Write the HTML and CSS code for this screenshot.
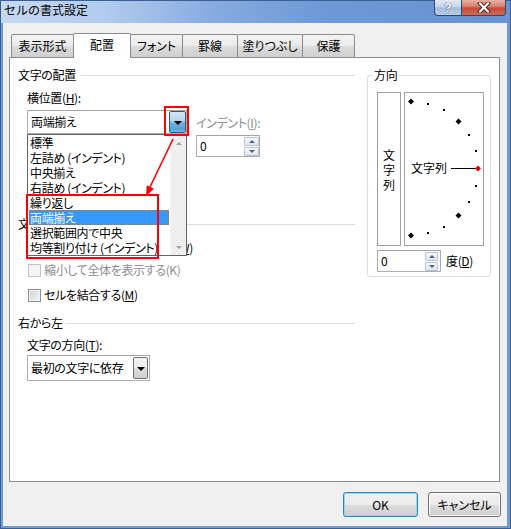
FILE: index.html
```html
<!DOCTYPE html>
<html lang="ja">
<head>
<meta charset="utf-8">
<title>セルの書式設定</title>
<link rel="stylesheet" href="styles.css">
</head>
<body>
<div class="window">
  <div class="titlebar">
    <div class="title">セルの書式設定</div>
    <div class="capbtns">
      <div class="capbtn help"><span class="qmark">?</span></div>
      <div class="capbtn close">
        <svg width="14" height="11" viewBox="0 0 14 11"><path d="M3 1.5 L11 9.5 M11 1.5 L3 9.5" stroke="#4a1a14" stroke-width="4" stroke-linecap="square"/><path d="M3 1.5 L11 9.5 M11 1.5 L3 9.5" stroke="#fff" stroke-width="2.2" stroke-linecap="square"/></svg>
      </div>
    </div>
  </div>
  <div class="client">
    <div class="tabs">
      <div class="tab w1">表示形式</div>
      <div class="tab active w2">配置</div>
      <div class="tab w3">フォント</div>
      <div class="tab w4">罫線</div>
      <div class="tab w5">塗りつぶし</div>
      <div class="tab w6">保護</div>
    </div>
    <div class="panel">
      <div class="col-left">
        <div class="gh">文字の配置</div>
        <div class="lbl">横位置(<u>H</u>):</div>
        <div class="row-h">
          <div class="combo-wrap">
            <div class="combo combo-h"><span class="combo-text">両端揃え</span><span class="ddbtn hot"><i class="tri"></i></span></div>
            <div class="listbox">
              <div class="items">
                <div class="item">標準</div>
                <div class="item">左詰め (インデント)</div>
                <div class="item">中央揃え</div>
                <div class="item">右詰め (インデント)</div>
                <div class="item">繰り返し</div>
                <div class="item sel">両端揃え</div>
                <div class="item">選択範囲内で中央</div>
                <div class="item">均等割り付け (インデント)</div>
              </div>
              <div class="vscroll"><i class="sa up"></i><i class="sa down"></i></div>
            </div>
            <div class="mark mark-btn"></div>
            <div class="mark mark-items"></div>
            <svg class="arrow" width="190" height="100" viewBox="0 0 190 100">
              <line x1="146" y1="29" x2="123" y2="77" stroke="#f00" stroke-width="1.6"/>
              <polygon points="119,86 127,78.7 119.7,75.3" fill="#f00"/>
            </svg>
          </div>
          <div class="indent">
            <div class="lbl-dis">インデント(<u>I</u>):</div>
            <div class="spin spin-indent"><span class="val">0</span><span class="spinbtns"><i class="sb"><b class="tu"></b></i><i class="sb"><b class="td"></b></i></span></div>
          </div>
        </div>
        <div class="gh gh-ctrl">文字の制御</div>
        <div class="cb cb-wrap"><i class="box"></i>折り返して全体を表示する(<u>W</u>)</div>
        <div class="cb cb-shrink dis"><i class="box"></i>縮小して全体を表示する(K)</div>
        <div class="cb cb-merge"><i class="box"></i>セルを結合する(<u>M</u>)</div>
        <div class="gh gh-rtl">右から左</div>
        <div class="lbl lbl-dir">文字の方向(<u>T</u>):</div>
        <div class="combo combo-dir"><span class="combo-text">最初の文字に依存</span><span class="ddbtn"><i class="tri"></i></span></div>
      </div>
      <fieldset class="orient">
        <legend>方向</legend>
        <div class="orient-body">
          <div class="vtext"><span>文</span><span>字</span><span>列</span></div>
          <div class="dial">
            <svg width="78" height="152" viewBox="0 0 78 152">
              <polygon points="6,5.5 9,8.5 6,11.5 3,8.5" fill="#000"/>
              <rect x="22" y="10" width="2" height="2" fill="#000"/>
              <rect x="38" y="16" width="2" height="2" fill="#000"/>
              <polygon points="53.5,25.5 56.5,28.5 53.5,31.5 50.5,28.5" fill="#000"/>
              <rect x="63" y="41" width="2" height="2" fill="#000"/>
              <rect x="70" y="57" width="2" height="2" fill="#000"/>
              <line x1="46" y1="75.5" x2="71" y2="75.5" stroke="#000" stroke-width="1"/>
              <polygon points="73,72.5 76,75.5 73,78.5 70,75.5" fill="#e00000"/>
              <rect x="70" y="92" width="2" height="2" fill="#000"/>
              <rect x="63" y="108" width="2" height="2" fill="#000"/>
              <polygon points="53.5,119.5 56.5,122.5 53.5,125.5 50.5,122.5" fill="#000"/>
              <rect x="38" y="133" width="2" height="2" fill="#000"/>
              <rect x="22" y="139" width="2" height="2" fill="#000"/>
              <polygon points="6,139.5 9,142.5 6,145.5 3,142.5" fill="#000"/>
            </svg>
            <span class="dial-text">文字列</span>
          </div>
        </div>
        <div class="deg-row">
          <div class="spin spin-deg"><span class="val">0</span><span class="spinbtns"><i class="sb"><b class="tu"></b></i><i class="sb"><b class="td"></b></i></span></div>
          <span class="deg-label">度(<u>D</u>)</span>
        </div>
      </fieldset>
    </div>
    <div class="btnrow">
      <button class="btn default">OK</button>
      <button class="btn cancel">キャンセル</button>
    </div>
  </div>
</div>
</body>
</html>
```

FILE: styles.css
```css
* { box-sizing: border-box; margin: 0; padding: 0; }
html, body { width: 511px; height: 529px; overflow: hidden; }
body {
  font-family: "Noto Sans CJK JP", "Noto Sans", sans-serif;
  font-size: 12px;
  color: #000;
  background: #6d9ad6;
  font-feature-settings: "palt" 1;
  letter-spacing: -0.35px;
}
u { text-decoration: underline; text-underline-offset: 1px; }

.window {
  width: 511px;
  height: 529px;
  border: 1px solid #3b5f92;
  background: #6f9cd8;
  display: flex;
  flex-direction: column;
}

.titlebar {
  height: 22px;
  flex: none;
  display: flex;
  align-items: flex-start;
  background: linear-gradient(to right, #c6d9f1 0%, #b3cced 20%, #86abdf 42%, #6c98d5 65%, #6993d2 100%);
}
.title {
  font-feature-settings: normal;
  letter-spacing: 0;
  line-height: 18px;
  padding-left: 3px;
  color: #000;
}
.capbtns { margin-left: auto; margin-right: 4px; margin-top: -1px; display: flex; }
.capbtn {
  height: 16px;
  border: 1px solid #34496a;
  border-top: none;
  display: flex;
  align-items: center;
  justify-content: center;
}
.help {
  width: 28px;
  border-radius: 0 0 0 4px;
  background: linear-gradient(#e2eaf5, #c5d5eb 45%, #a5bddd 52%, #b8cde7);
}
.qmark {
  font-family: "Liberation Sans", sans-serif;
  font-weight: bold;
  font-size: 12px;
  line-height: 14px;
  letter-spacing: 0;
  color: #fff;
  text-shadow: 0 0 1px #2b3d5a, 0 0 1px #2b3d5a;
}
.close {
  width: 45px;
  margin-left: -1px;
  border-radius: 0 0 4px 0;
  background: linear-gradient(#e9b1a4, #d57b69 45%, #c24a3b 52%, #d16a56);
}

.client {
  margin: 0 3px 2px 2px;
  width: 504px;
  height: 503px;
  background: #f0f0f0;
  padding: 10px 6px 0 6px;
  display: flex;
  flex-direction: column;
}

.tabs {
  display: flex;
  align-items: flex-start;
  height: 25px;
  margin-left: 2px;
  margin-bottom: -1px;
  position: relative;
  z-index: 2;
}
.tab {
  height: 23px;
  margin-top: 1px;
  margin-left: -1px;
  border: 1px solid #898c95;
  border-bottom: none;
  border-radius: 2px 2px 0 0;
  background: linear-gradient(#f3f3f3, #ebebeb 50%, #dddddd 50%, #cfcfcf);
  line-height: 21px;
  letter-spacing: 0;
  text-align: center;
  white-space: nowrap;
}
.tab:first-child { margin-left: 0; }
.tab.active {
  height: 25px;
  margin-top: 0;
  background: #fff;
  position: relative;
  z-index: 1;
  line-height: 22px;
}
.w1 { width: 63px; }
.w2 { width: 58px; }
.w3 { width: 53px; }
.w4 { width: 56px; }
.w5 { width: 66px; }
.w6 { width: 53px; }

.panel {
  position: relative;
  z-index: 1;
  width: 491px;
  height: 425px;
  flex: none;
  border: 1px solid #898c95;
  background: #fff;
  padding: 9px 8px 0 8px;
  display: grid;
  grid-template-columns: 337px 124px;
  column-gap: 12px;
  align-items: start;
}

.col-left { position: relative; }
.gh {
  display: flex;
  align-items: center;
  height: 16px;
  line-height: 16px;
  white-space: nowrap;
}
.gh::after {
  content: "";
  flex: 1;
  height: 1px;
  background: #d5dfe5;
  margin-left: 4px;
}
.lbl { line-height: 16px; padding-left: 9px; margin-top: 7px; }
.row-h { display: flex; align-items: flex-start; margin-top: 4px; padding-left: 9px; }
.combo-wrap { position: relative; width: 160px; height: 24px; flex: none; }

.combo {
  display: flex;
  align-items: stretch;
  background: #fff;
  border: 1px solid #abadb3;
  border-top-color: #a0a4ab;
}
.combo-h { width: 160px; height: 24px; }
.combo-text { flex: 1; padding-left: 3px; line-height: 22px; white-space: nowrap; }
.ddbtn {
  width: 17px;
  flex: none;
  display: flex;
  align-items: center;
  justify-content: center;
  border: 1px solid #707070;
  border-radius: 2px;
  background: linear-gradient(#f2f2f2, #ebebeb 50%, #dddddd 50%, #cfcfcf);
}
.ddbtn.hot {
  border-color: #2c5c84;
  background: linear-gradient(#d5e7f6, #b7d5ee 45%, #72b2e3 50%, #5aa1d9 85%, #74b5e4);
}
.tri {
  width: 0;
  height: 0;
  border-left: 4px solid transparent;
  border-right: 4px solid transparent;
  border-top: 4px solid #000;
  margin-top: 1px;
}

.listbox {
  position: absolute;
  left: 0;
  top: 24px;
  width: 160px;
  height: 122px;
  border: 1px solid #646464;
  background: #fff;
  display: flex;
  z-index: 5;
}
.items { width: 142px; flex: none; }
.item {
  height: 15px;
  line-height: 15px;
  margin-left: 1px;
  width: 140px;
  padding-left: 1px;
  white-space: nowrap;
}
.item.sel {
  background: #3399ff;
  color: #fff;
  outline: 1px dotted #b5773a;
  outline-offset: -1px;
}
.vscroll {
  width: 16px;
  flex: none;
  background: #efefef;
  border-left: 1px solid #f8f8f8;
  display: flex;
  flex-direction: column;
  justify-content: space-between;
  align-items: center;
  padding: 7px 0 6px;
}
.sa { width: 0; height: 0; border-left: 3px solid transparent; border-right: 3px solid transparent; }
.sa.up { border-bottom: 3px solid #a3a3a3; }
.sa.down { border-top: 3px solid #a3a3a3; }

.mark {
  position: absolute;
  border: 2px solid #f00;
  pointer-events: none;
  z-index: 6;
}
.mark-btn { left: 137px; top: -4px; width: 25px; height: 30px; }
.mark-items { left: -1px; top: 84px; width: 133px; height: 65px; }
.arrow { position: absolute; left: 0; top: 0; overflow: visible; z-index: 6; }

.indent { margin-left: 9px; margin-top: 5px; }
.lbl-dis { line-height: 16px; color: #8d8d8d; white-space: nowrap; }

.spin {
  display: flex;
  align-items: center;
  background: #fff;
  border: 1px solid #abadb3;
  border-top-color: #a0a4ab;
}
.spin .val { flex: 1; padding-left: 3px; line-height: 20px; }
.spinbtns { display: flex; flex-direction: column; flex: none; }
.sb {
  width: 15px;
  height: 9px;
  border: 1px solid #b5c3d4;
  border-radius: 1px;
  background: linear-gradient(#f8fafc, #dfe6ef);
  display: flex;
  align-items: center;
  justify-content: center;
}
.sb + .sb { margin-top: 1px; }
.tu, .td { width: 0; height: 0; border-left: 3px solid transparent; border-right: 3px solid transparent; }
.tu { border-bottom: 3px solid #4d6185; }
.td { border-top: 3px solid #4d6185; }
.spin-indent { width: 64px; height: 22px; margin-top: 4px; }

.gh-ctrl { margin-top: 59px; }
.cb {
  display: flex;
  align-items: center;
  height: 16px;
  line-height: 16px;
  padding-left: 10px;
  white-space: nowrap;
}
.box {
  width: 13px;
  height: 13px;
  flex: none;
  margin-right: 3px;
  border: 1px solid #8e8f8f;
  background: linear-gradient(135deg, #cdd1d6, #f7f7f7);
  box-shadow: inset 0 0 0 1px #f2f2f2;
}
.cb.dis { color: #8d8d8d; }
.cb.dis .box { border-color: #c4c4c4; background: #f4f4f4; box-shadow: none; }
.cb-wrap { margin-top: 8px; }
.cb-shrink { margin-top: 6px; }
.cb-merge { margin-top: 9px; }
.gh-rtl { margin-top: 12px; }
.gh-rtl::after { margin-left: 3px; }
.lbl-dir { margin-top: 6px; }
.combo-dir { margin-top: 2px; margin-left: 9px; width: 123px; height: 26px; }
.combo-dir .combo-text { line-height: 24px; }
.combo-dir .ddbtn { width: 15px; margin: 1px; }

.orient {
  border: 1px solid #d5dfe5;
  border-radius: 3px;
  padding: 0 0 4px 5px;
  min-width: 0;
  width: 124px;
}
.orient legend { padding: 0 1px; line-height: 16px; font-size: 12px; }
.orient-body { display: flex; gap: 3px; margin: 9px 0 0 4px; }
.vtext {
  width: 24px;
  height: 154px;
  border: 1px solid #a0a0a0;
  background: #fff;
  display: flex;
  flex-direction: column;
  align-items: center;
  justify-content: center;
  line-height: 15px;
  letter-spacing: 0;
}
.dial {
  width: 80px;
  height: 154px;
  border: 1px solid #a0a0a0;
  background: #fff;
  position: relative;
}
.dial svg { position: absolute; left: 0; top: 0; }
.dial-text { position: absolute; left: 6px; top: 67px; line-height: 16px; white-space: nowrap; letter-spacing: 0; }
.deg-row { display: flex; align-items: center; margin: 4px 0 0 4px; }
.spin-deg { width: 64px; height: 22px; }
.spin-deg .sb { width: 13px; }
.spin-deg .spinbtns { margin-right: 2px; }
.deg-label { margin-left: 5px; line-height: 16px; }

.btnrow {
  display: flex;
  justify-content: flex-end;
  gap: 10px;
  margin-top: 10px;
}
.btn {
  font: inherit;
  font-feature-settings: "palt" 1;
  letter-spacing: 0;
  color: #000;
  height: 25px;
  width: 75px;
  border: 1px solid #707070;
  border-radius: 3px;
  background: linear-gradient(#f2f2f2, #ebebeb 50%, #dddddd 50%, #cfcfcf);
  box-shadow: inset 0 0 0 1px #fbfbfb;
  line-height: 23px;
  text-align: center;
}
.btn.default {
  border-color: #3c7fb1;
  box-shadow: inset 0 0 0 1px #8fd9f8;
}
.btn.cancel { width: 73px; }
```
